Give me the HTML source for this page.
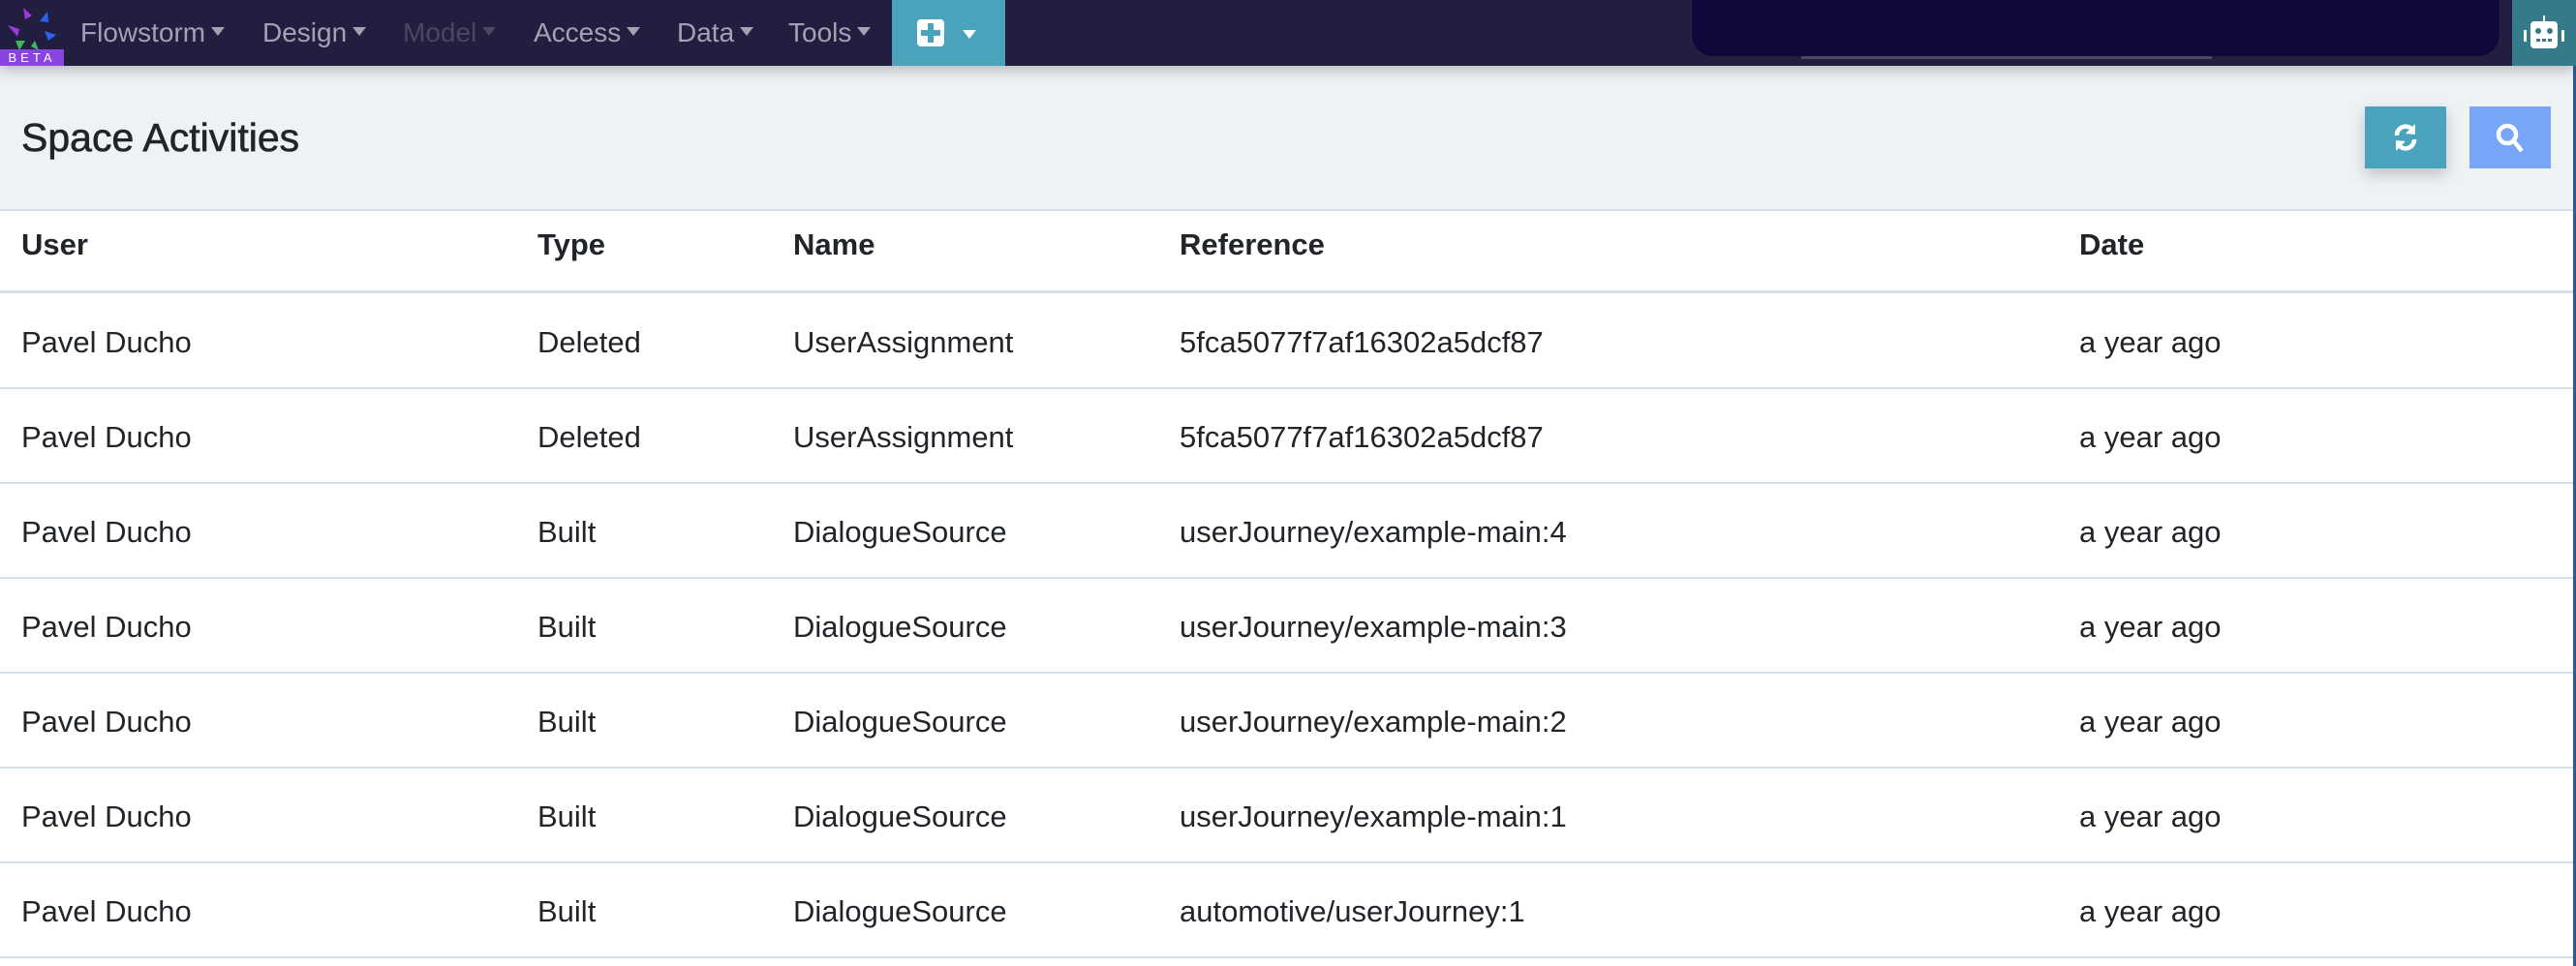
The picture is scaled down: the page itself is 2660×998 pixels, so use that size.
<!DOCTYPE html>
<html><head><meta charset="utf-8"><style>
*{box-sizing:border-box;margin:0;padding:0}
body{width:2660px;height:998px;overflow:hidden;background:#fff;font-family:"Liberation Sans",Arial,sans-serif;color:#212529;position:relative}
.nav{position:absolute;left:0;top:0;width:2660px;height:68px;background:#221e40;box-shadow:0 4px 14px rgba(0,0,0,.25);z-index:2}
.ni{position:absolute;top:0;height:68px;line-height:68px;font-size:28px;color:#a3a1b3}
.ni:after{content:"";display:inline-block;margin-left:6px;vertical-align:middle;border-left:7px solid transparent;border-right:7px solid transparent;border-top:9px solid currentColor;position:relative;top:-3px}
.beta{position:absolute;left:0;top:51px;width:66px;height:17px;background:#8a45e0;color:#fff;font-size:13px;letter-spacing:4px;text-align:center;line-height:17px}
.head{position:absolute;left:0;top:68px;width:2660px;height:149px;background:#eef2f5}
h1{position:absolute;left:22px;top:118px;font-size:41px;font-weight:normal;-webkit-text-stroke:.6px #212529;line-height:48px}
.btn{position:absolute;top:110px;width:84px;height:64px;box-shadow:0 6px 14px rgba(0,0,0,.2)}
.row{position:absolute;left:0;width:2657px;border-bottom:2px solid #d6e0e8}
.c{position:absolute;font-size:31px;line-height:36px}
</style></head><body>
<div class="nav">
<svg style="position:absolute;left:6px;top:8px" width="52" height="46" viewBox="0 0 52 46">
<polygon points="18,0 27,8 20,12" fill="#9b3ae0"/>
<polygon points="43,4 44,15 35,14" fill="#2b63f0"/>
<polygon points="2,18 14,22 12,30" fill="#9b3ae0"/>
<polygon points="40,24 52,28 44,34" fill="#2b63f0"/>
<polygon points="10,34 20,34 14,44" fill="#3db85a"/>
<polygon points="30,34 34,44 26,40" fill="#3db85a"/>
</svg>
<div class="beta">BETA</div>
<div class="ni" style="left:83px">Flowstorm</div>
<div class="ni" style="left:271px">Design</div>
<div class="ni" style="left:416px;color:#4a4663">Model</div>
<div class="ni" style="left:551px">Access</div>
<div class="ni" style="left:699px">Data</div>
<div class="ni" style="left:814px">Tools</div>
<div style="position:absolute;left:921px;top:0;width:117px;height:68px;background:#4aa3bd">
<div style="position:absolute;left:26px;top:20px;width:28px;height:28px;background:#fff;border-radius:4px"></div>
<div style="position:absolute;left:37px;top:24px;width:6px;height:20px;background:#4aa3bd"></div>
<div style="position:absolute;left:30px;top:31px;width:20px;height:6px;background:#4aa3bd"></div>
<div style="position:absolute;left:73px;top:31px;border-left:7px solid transparent;border-right:7px solid transparent;border-top:9px solid #fff"></div>
</div>
<div style="position:absolute;left:1747px;top:0;width:834px;height:58px;background:#10073a;border-radius:0 0 22px 22px"></div>
<div style="position:absolute;left:1860px;top:58px;width:424px;height:3px;background:#4c4866"></div>
<div style="position:absolute;left:2594px;top:0;width:66px;height:68px;background:#357a8a">
<svg style="position:absolute;left:11px;top:16px" width="44" height="34" viewBox="0 0 44 34"><rect x="21" y="0" width="2" height="6" fill="#fff"/><rect x="8" y="6" width="28" height="28" rx="4" fill="#fff"/><rect x="1" y="15" width="3" height="12" fill="#fff"/><rect x="40" y="15" width="3" height="12" fill="#fff"/><circle cx="16" cy="16" r="3" fill="#357a8a"/><circle cx="28" cy="16" r="3" fill="#357a8a"/><rect x="14" y="24" width="4" height="3" fill="#357a8a"/><rect x="20" y="24" width="4" height="3" fill="#357a8a"/><rect x="26" y="24" width="4" height="3" fill="#357a8a"/></svg>
</div>
</div>
<div class="head"></div>
<h1>Space Activities</h1>
<div class="btn" style="left:2442px;background:#4aa3bd"><svg style="position:absolute;left:26px;top:16px" width="32" height="32" viewBox="0 0 32 32" fill="none" stroke="#fff" stroke-width="4.5"><path d="M7 14a9 9 0 0 1 16-6"/><path d="M25 18a9 9 0 0 1-16 6"/><polygon points="26,2 26,13 16,12" fill="#fff" stroke="none"/><polygon points="6,30 6,19 16,20" fill="#fff" stroke="none"/></svg></div>
<div class="btn" style="left:2550px;background:#78a5f5;box-shadow:none"><svg style="position:absolute;left:26px;top:16px" width="32" height="32" viewBox="0 0 32 32" fill="none" stroke="#fff" stroke-width="4.5"><circle cx="13" cy="13" r="9"/><path d="M20 20l8 10"/></svg></div>
<div style="position:absolute;left:0;top:216px;width:2660px;height:2px;background:#d6e0e8"></div>
<div class="row" style="top:218px;height:85px;border-bottom:3px solid #d6e0e8">
<div class="c" style="left:22px;top:17px;font-weight:bold">User</div>
<div class="c" style="left:555px;top:17px;font-weight:bold">Type</div>
<div class="c" style="left:819px;top:17px;font-weight:bold">Name</div>
<div class="c" style="left:1218px;top:17px;font-weight:bold">Reference</div>
<div class="c" style="left:2147px;top:17px;font-weight:bold">Date</div>
</div>
<div class="row" style="top:303px;height:99px"><div class="c" style="left:22px;top:33px">Pavel Ducho</div><div class="c" style="left:555px;top:33px">Deleted</div><div class="c" style="left:819px;top:33px">UserAssignment</div><div class="c" style="left:1218px;top:33px">5fca5077f7af16302a5dcf87</div><div class="c" style="left:2147px;top:33px">a year ago</div></div>
<div class="row" style="top:402px;height:98px"><div class="c" style="left:22px;top:32px">Pavel Ducho</div><div class="c" style="left:555px;top:32px">Deleted</div><div class="c" style="left:819px;top:32px">UserAssignment</div><div class="c" style="left:1218px;top:32px">5fca5077f7af16302a5dcf87</div><div class="c" style="left:2147px;top:32px">a year ago</div></div>
<div class="row" style="top:500px;height:98px"><div class="c" style="left:22px;top:32px">Pavel Ducho</div><div class="c" style="left:555px;top:32px">Built</div><div class="c" style="left:819px;top:32px">DialogueSource</div><div class="c" style="left:1218px;top:32px">userJourney/example-main:4</div><div class="c" style="left:2147px;top:32px">a year ago</div></div>
<div class="row" style="top:598px;height:98px"><div class="c" style="left:22px;top:32px">Pavel Ducho</div><div class="c" style="left:555px;top:32px">Built</div><div class="c" style="left:819px;top:32px">DialogueSource</div><div class="c" style="left:1218px;top:32px">userJourney/example-main:3</div><div class="c" style="left:2147px;top:32px">a year ago</div></div>
<div class="row" style="top:696px;height:98px"><div class="c" style="left:22px;top:32px">Pavel Ducho</div><div class="c" style="left:555px;top:32px">Built</div><div class="c" style="left:819px;top:32px">DialogueSource</div><div class="c" style="left:1218px;top:32px">userJourney/example-main:2</div><div class="c" style="left:2147px;top:32px">a year ago</div></div>
<div class="row" style="top:794px;height:98px"><div class="c" style="left:22px;top:32px">Pavel Ducho</div><div class="c" style="left:555px;top:32px">Built</div><div class="c" style="left:819px;top:32px">DialogueSource</div><div class="c" style="left:1218px;top:32px">userJourney/example-main:1</div><div class="c" style="left:2147px;top:32px">a year ago</div></div>
<div class="row" style="top:892px;height:98px"><div class="c" style="left:22px;top:32px">Pavel Ducho</div><div class="c" style="left:555px;top:32px">Built</div><div class="c" style="left:819px;top:32px">DialogueSource</div><div class="c" style="left:1218px;top:32px">automotive/userJourney:1</div><div class="c" style="left:2147px;top:32px">a year ago</div></div>
<div style="position:absolute;left:2657px;top:68px;width:3px;height:930px;background:#2a5a9a"></div>
</body></html>
